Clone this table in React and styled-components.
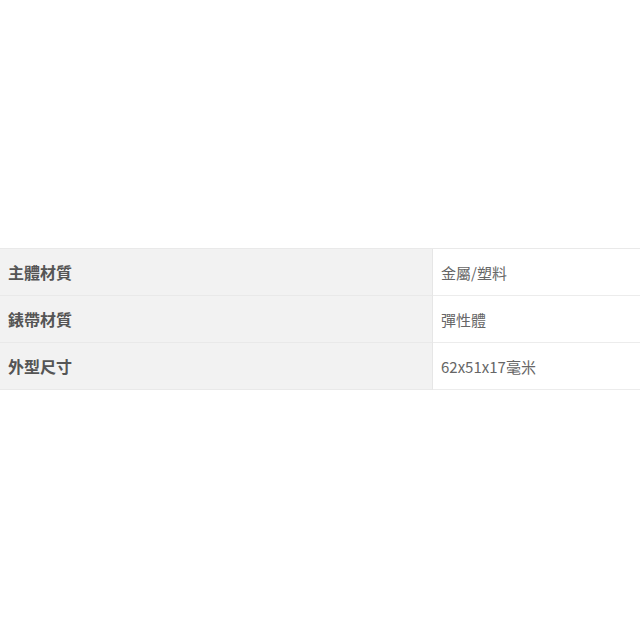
import React from "react";
import styled, { createGlobalStyle } from "styled-components";

const Global = createGlobalStyle`
  html, body { margin: 0; padding: 0; background: #fff; }
  body { font-family: "Noto Sans CJK TC", "Noto Sans", sans-serif; }
`;

const Page = styled.div`
  width: 640px;
  height: 640px;
  padding-top: 248px;
  box-sizing: border-box;
`;

const Table = styled.div`
  display: grid;
  grid-template-columns: 433px 1fr;
  border-top: 1px solid #e9e9e9;
`;

const Label = styled.div`
  height: 47px;
  box-sizing: border-box;
  display: flex;
  align-items: center;
  padding-left: 8px;
  background: #f2f2f2;
  border-right: 1px solid #e6e6e6;
  border-bottom: 1px solid #e9e9e9;
  color: #555;
  font-weight: 700;
  font-size: 16px;
`;

const Value = styled.div`
  height: 47px;
  box-sizing: border-box;
  display: flex;
  align-items: center;
  padding-left: 8px;
  background: #fff;
  border-bottom: 1px solid #ececec;
  color: #666;
  font-size: 15px;
`;

const rows = [
  ["主體材質", "金屬/塑料"],
  ["錶帶材質", "彈性體"],
  ["外型尺寸", "62x51x17毫米"],
];

export default function App() {
  return (
    <Page>
      <Global />
      <Table>
        {rows.map(([k, v]) => (
          <React.Fragment key={k}>
            <Label>{k}</Label>
            <Value>{v}</Value>
          </React.Fragment>
        ))}
      </Table>
    </Page>
  );
}
